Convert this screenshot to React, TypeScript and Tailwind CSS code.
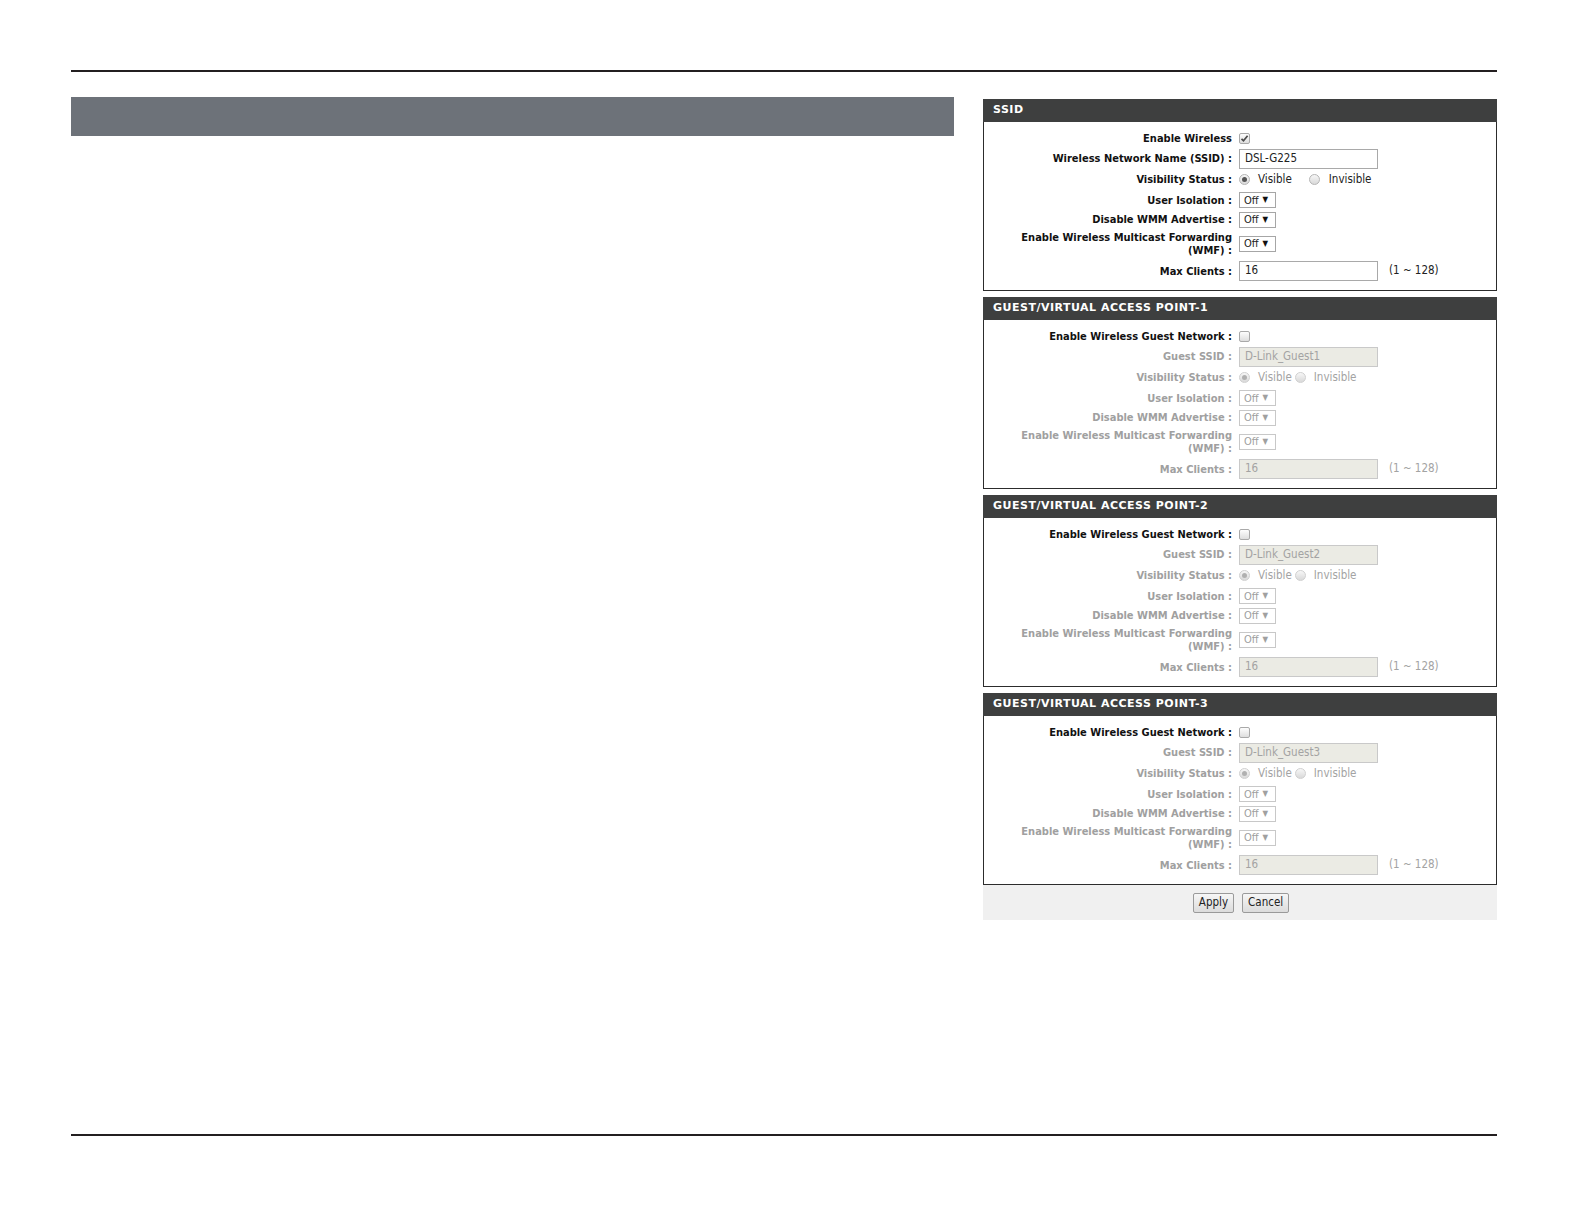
import React from 'react';

const ROW_H = ['h-[20px]', 'h-[21px]', 'h-[21px]', 'h-[20px]', 'h-[19px]', 'h-[29px]', 'h-[26px]'];

function CheckBox({ checked }: { checked?: boolean }) {
  return (
    <span className="flex h-[11px] w-[11px] items-center justify-center rounded-[2px] border border-[#a9a9a9] bg-gradient-to-b from-[#fdfdfd] to-[#dedede]">
      {checked && (
        <svg width="9" height="9" viewBox="0 0 9 9">
          <path d="M1.5 4.8 L3.5 6.8 L7.6 1.8" fill="none" stroke="#4a4a4a" strokeWidth="1.7" />
        </svg>
      )}
    </span>
  );
}

function Radio({ on, dim }: { on?: boolean; dim?: boolean }) {
  return (
    <span
      className={`flex h-[11px] w-[11px] items-center justify-center rounded-full border bg-gradient-to-b from-[#f7f7f7] to-[#d9d9d9] ${
        dim ? 'border-[#d0d0d0]' : 'border-[#b5b5b5]'
      }`}
    >
      {on && <span className={`h-[5px] w-[5px] rounded-full ${dim ? 'bg-[#b0b0b0]' : 'bg-[#555]'}`} />}
    </span>
  );
}

function Select({ dim }: { dim?: boolean }) {
  return (
    <span
      className={`flex h-[16px] w-[37px] items-center gap-[4px] border bg-white pl-[4px] text-[11px] leading-none ${
        dim ? 'border-[#c8c8c8] text-[#a0a0a0]' : 'border-[#a6a6a6] text-[#222]'
      }`}
    >
      Off
      <span className={`text-[8px] ${dim ? 'text-[#a0a0a0]' : 'text-[#111]'}`}>▼</span>
    </span>
  );
}

function TextBox({ value, dim, hint }: { value: string; dim?: boolean; hint?: boolean }) {
  return (
    <div className="flex items-center">
      <span
        className={`flex h-[20px] w-[139px] items-center border px-[5px] text-[11.5px] ${
          dim ? 'border-[#c9c9c9] bg-[#ebebe4] text-[#a3a3a3]' : 'border-[#a9a9a9] bg-white text-[#222]'
        }`}
      >
        {value}
      </span>
      {hint && (
        <span className={`ml-[11px] text-[11.5px] ${dim ? 'text-[#a3a3a3]' : 'text-[#222]'}`}>(1 ~ 128)</span>
      )}
    </div>
  );
}

function Section({ title, guest, n }: { title: string; guest?: boolean; n?: number }) {
  const dim = !!guest;
  const labels: string[][] = guest
    ? [
        ['Enable Wireless Guest Network :'],
        ['Guest SSID :'],
        ['Visibility Status :'],
        ['User Isolation :'],
        ['Disable WMM Advertise :'],
        ['Enable Wireless Multicast Forwarding', '(WMF) :'],
        ['Max Clients :'],
      ]
    : [
        ['Enable Wireless'],
        ['Wireless Network Name (SSID) :'],
        ['Visibility Status :'],
        ['User Isolation :'],
        ['Disable WMM Advertise :'],
        ['Enable Wireless Multicast Forwarding', '(WMF) :'],
        ['Max Clients :'],
      ];

  const controls = [
    <CheckBox checked={!guest} />,
    <TextBox value={guest ? `D-Link_Guest${n}` : 'DSL-G225'} dim={dim} />,
    guest ? (
      <div className="flex items-center text-[11.5px] text-[#a3a3a3]">
        <Radio on dim />
        <span className="ml-[8px]">Visible</span>
        <span className="ml-[3px]">
          <Radio dim />
        </span>
        <span className="ml-[8px]">Invisible</span>
      </div>
    ) : (
      <div className="flex items-center text-[11.5px] text-[#222]">
        <Radio on />
        <span className="ml-[8px]">Visible</span>
        <span className="ml-[17px]">
          <Radio />
        </span>
        <span className="ml-[9px]">Invisible</span>
      </div>
    ),
    <Select dim={dim} />,
    <Select dim={dim} />,
    <Select dim={dim} />,
    <TextBox value="16" dim={dim} hint />,
  ];

  return (
    <div className="flex flex-col">
      <div className="flex h-[23px] items-center bg-[#3e3f3f] pl-[10px] font-['DejaVu_Sans',sans-serif] text-[11px] font-bold tracking-[0.5px] text-white">
        {title}
      </div>
      <div className="flex flex-col border-x border-b border-[#2c2c2c] pb-[6px] pt-[6px]">
        {labels.map((lab, i) => (
          <div key={i} className={`flex items-center ${ROW_H[i]}`}>
            <div
              className={`flex w-[248px] flex-col items-end text-right font-['DejaVu_Sans_Condensed',sans-serif] text-[11px] font-bold leading-[13px] ${
                dim && i > 0 ? 'text-[#a0a0a0]' : 'text-[#111]'
              }`}
            >
              {lab.map((l, j) => (
                <span key={j}>{l}</span>
              ))}
            </div>
            <div className="ml-[7px] flex items-center">{controls[i]}</div>
          </div>
        ))}
      </div>
    </div>
  );
}

function Btn({ children }: { children: React.ReactNode }) {
  return (
    <span className="flex h-[20px] items-center rounded-[2px] border border-[#9a9a9a] bg-gradient-to-b from-[#f6f6f6] to-[#dcdcdc] px-[5px] text-[11.5px] text-[#222]">
      {children}
    </span>
  );
}

export default function App() {
  return (
    <div className="w-full bg-white font-['DejaVu_Sans_Condensed',sans-serif]">
      <div className="ml-[71px] w-[1426px] pt-[70px]">
        <div className="h-[2px] bg-[#231f20]" />
        <div className="mt-[25px] flex gap-[29px]">
          <div className="h-[39px] w-[883px] bg-[#6d7279]" />
          <div className="mt-[2px] flex w-[514px] flex-col gap-[6px]">
            <Section title="SSID" />
            <Section title="GUEST/VIRTUAL ACCESS POINT-1" guest n={1} />
            <Section title="GUEST/VIRTUAL ACCESS POINT-2" guest n={2} />
            <Section title="GUEST/VIRTUAL ACCESS POINT-3" guest n={3} />
            <div className="-mt-[6px] flex h-[35px] items-center justify-center gap-[8px] bg-[#f0f0f0] pl-[2px]">
              <Btn>Apply</Btn>
              <Btn>Cancel</Btn>
            </div>
          </div>
        </div>
        <div className="mt-[214px] h-[2px] bg-[#231f20]" />
      </div>
    </div>
  );
}
